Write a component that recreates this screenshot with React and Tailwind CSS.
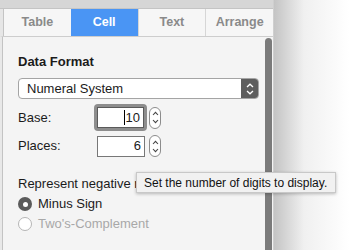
import React from 'react';

const tabs = ['Table', 'Cell', 'Text', 'Arrange'];

function Stepper() {
  return (
    <div className="w-[12px] h-[22px] rounded-[6px] border border-[#8c8c8c] bg-white flex flex-col items-center justify-center gap-[3px]">
      <svg width="7" height="5" viewBox="0 0 7 5">
        <path d="M1 4 L3.5 1.3 L6 4" fill="none" stroke="#444" strokeWidth="1.1" />
      </svg>
      <svg width="7" height="5" viewBox="0 0 7 5">
        <path d="M1 1 L3.5 3.7 L6 1" fill="none" stroke="#444" strokeWidth="1.1" />
      </svg>
    </div>
  );
}

export default function App() {
  return (
    <div className="relative w-[349px] h-[250px] flex overflow-hidden bg-white font-['Liberation_Sans',Arial,sans-serif] text-[13px] text-[#1b1b1b]">
      <div className="w-[274px] flex flex-col bg-[#f4f4f4] border-r border-[#cfcfcf]">
        <div className="h-[9px] bg-[#d6d6d6] border-b border-[#c4c4c4]" />
        <div className="flex h-[28px] bg-[#f6f6f6] border-b border-[#cdcdcd] border-l-[3px] border-l-[#e6e6e6]">
          <div className="w-px bg-[#c4c4c4]" />
          {tabs.map((t, i) => (
            <div
              key={t}
              className={`flex-1 flex items-center justify-center text-[12.5px] font-bold ${
                i === 1 ? 'bg-[#4a95f4] text-white' : 'text-[#8a8a8a]'
              } ${i > 1 ? 'border-l border-[#d6d6d6]' : ''}`}
            >
              {t}
            </div>
          ))}
        </div>
        <div className="flex flex-1">
          <div className="w-[3px] bg-[#e8e8e8] border-r border-[#c3c3c3]" />
          <div className="flex-1 pl-[15px] pr-[6px] pt-[17px] flex flex-col">
            <div className="font-bold leading-[16px]">Data Format</div>
            <div className="mt-[8px] h-[21px] flex rounded-[4px] border border-[#a4a4a4] bg-white overflow-hidden">
              <div className="flex-1 pl-[8px] flex items-center leading-[16px]">Numeral System</div>
              <div className="w-[17px] bg-[#5d5d5d] flex flex-col items-center justify-center gap-[2px]">
                <svg width="8" height="5" viewBox="0 0 8 5">
                  <path d="M1 4 L4 1.2 L7 4" fill="none" stroke="#fff" strokeWidth="1.3" />
                </svg>
                <svg width="8" height="5" viewBox="0 0 8 5">
                  <path d="M1 1 L4 3.8 L7 1" fill="none" stroke="#fff" strokeWidth="1.3" />
                </svg>
              </div>
            </div>
            <div className="mt-[5px] flex items-center h-[27px]">
              <div className="w-[76px]">Base:</div>
              <div className="p-[3px] rounded-[4px] bg-[#8d8d8d]">
                <div className="w-[47px] h-[21px] bg-white border border-[#5a5a5a] flex items-center justify-end pr-[3px] leading-[16px]">
                  <span className="w-px h-[15px] bg-black mr-[1px]" />
                  10
                </div>
              </div>
              <div className="ml-[2px]">
                <Stepper />
              </div>
            </div>
            <div className="mt-[4px] flex items-center h-[22px]">
              <div className="w-[79px]">Places:</div>
              <div className="w-[48px] h-[21px] bg-white border border-[#777] flex items-center justify-end pr-[3px] leading-[16px]">
                6
              </div>
              <div className="ml-[4px]">
                <Stepper />
              </div>
            </div>
            {/* the tooltip lies over the end of this label, as in the screenshot */}
            <div className="mt-[19px] leading-[16px] whitespace-nowrap">Represent negative numbers</div>
            <div className="mt-[3px] flex items-center gap-[6px] h-[18px]">
              <div className="w-[14px] h-[14px] rounded-full bg-[#5b5b5b] flex items-center justify-center">
                <div className="w-[5px] h-[5px] rounded-full bg-white" />
              </div>
              <span>Minus Sign</span>
            </div>
            <div className="mt-[2px] flex items-center gap-[6px] h-[18px] text-[#a8a8a8]">
              <div className="w-[14px] h-[14px] rounded-full border border-[#b5b5b5] bg-white" />
              <span>Two's-Complement</span>
            </div>
          </div>
          <div className="w-[8px] pr-[1px] pt-[1px] flex justify-end">
            <div className="w-[7px] h-full rounded-t-full bg-[#7b7b7b]" />
          </div>
        </div>
      </div>
      <div className="flex-1 bg-gradient-to-r from-[#c4c4c4] via-[#f0f0f0] via-40% to-white" />
      <div className="absolute left-[136px] top-[172px] w-[200px] h-[21px] bg-[#f1f1f1] border border-[#c8c8c8] shadow-[0_1px_3px_rgba(0,0,0,0.25)] flex items-center pl-[7px] text-[12px] text-[#111] whitespace-nowrap">
        Set the number of digits to display.
      </div>
    </div>
  );
}
